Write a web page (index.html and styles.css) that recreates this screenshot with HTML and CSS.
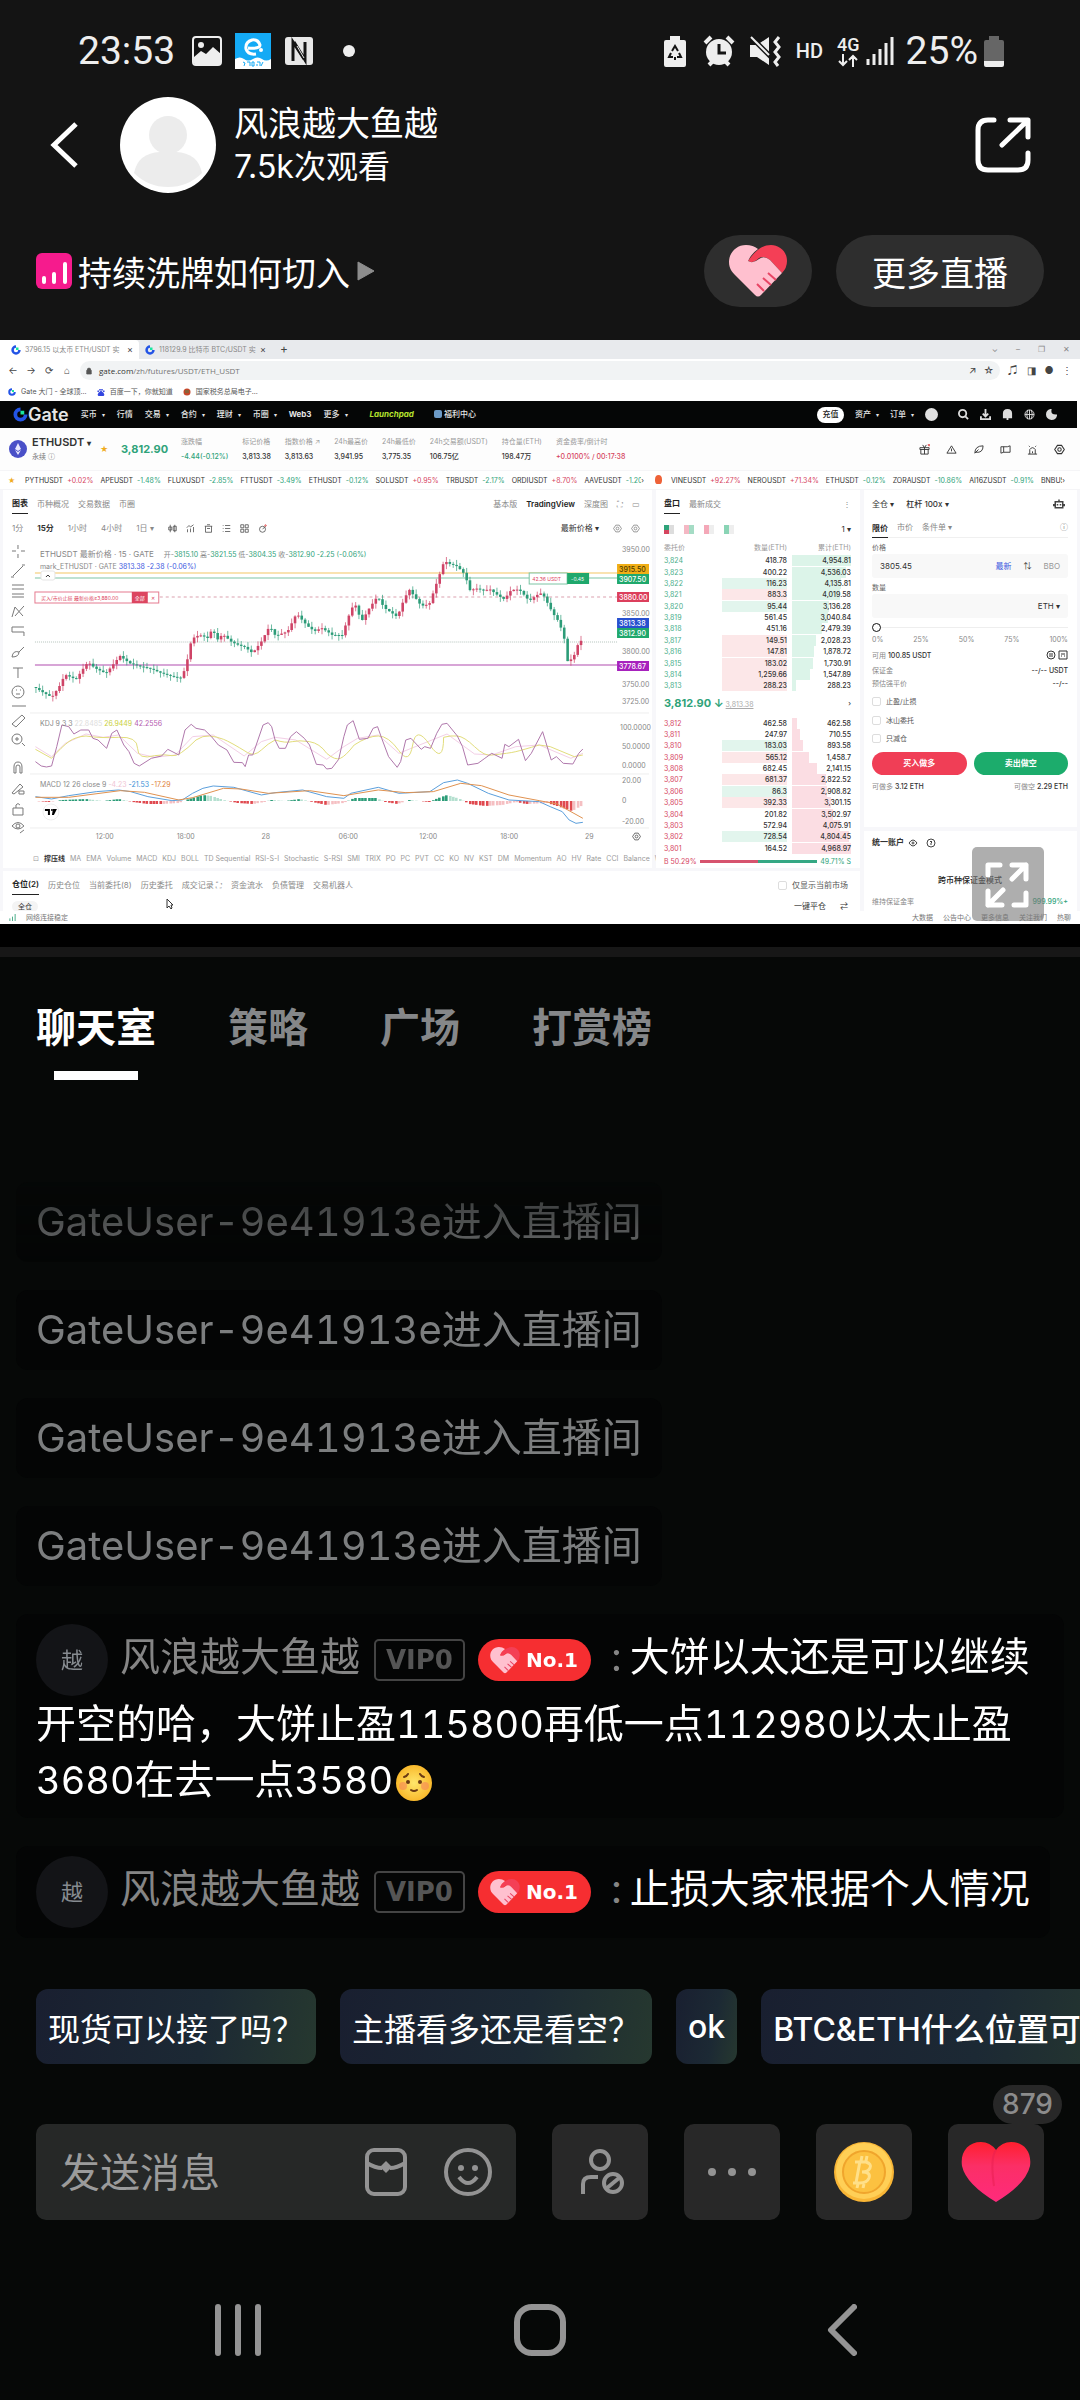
FILE: index.html
```html
<!DOCTYPE html>
<html lang="zh-CN">
<head>
    <meta charset="UTF-8">
    <meta name="viewport" content="width=device-width, initial-scale=1.0">
    <title>风浪越大鱼越 - 直播间</title>
    <link rel="stylesheet" href="styles.css">
</head>
<body>
    <!-- Shared icons -->
    <svg class="defs" aria-hidden="true">
        <symbol id="handshake" viewBox="0 0 58 53">
            <path class="hs-back" d="M19 16Q24 19 30 13Q35 10 41 15L53 28Q58 23 58 16C58 6 50 0 42 0C33 0 26 6 19 16Z"/>
            <path class="hs-front" d="M17 0C7 0 0 8 0 17C0 23 3 27 6 30L26 50Q29 53 32 50L53 28L41 15Q35 10 30 14Q24 19 19 16Q22 9 29 4Q24 0 17 0Z"/>
            <path class="hs-line" d="M28 39l7 7M34 33l8 7M39 28l8 7"/>
        </symbol>
        <symbol id="gate" viewBox="0 0 16 16">
            <path d="M8 2.5A5.5 5.5 0 1 0 13.5 8" fill="none" stroke="#2354e6" stroke-width="4"/>
            <path d="M8 4h4v4H8z" fill="#17e6a1"/>
        </symbol>
        <symbol id="hex" viewBox="0 0 16 16">
            <path d="M5 2h6l4 6-4 6H5L1 8z" fill="none" stroke="currentColor" stroke-width="1.5"/>
            <circle cx="8" cy="8" r="2.5" fill="none" stroke="currentColor" stroke-width="1.5"/>
        </symbol>
    </svg>

    <header class="top">
        <div class="status">
            <span class="clock">23:53</span>
            <svg class="st-img" viewBox="0 0 30 30"><rect x="1" y="1" width="28" height="28" rx="3" fill="none" stroke="#eee" stroke-width="2"/><circle cx="9" cy="9" r="3" fill="#eee"/><path d="M2 21l7-6 5 3 7-7 8 7v9q0 2-2 2H4q-2 0-2-2z" fill="#eee"/></svg>
            <svg class="st-app" viewBox="0 0 36 36"><path fill="#14aaf5" d="M0 0h36v36H0z"/><path fill="#fff" d="M0 26q5-3 9 0t9 0 9 0 9 0v10H0z"/><path d="M13 15q12 1 12-3-2-6-8-5-7 2-6 9 2 6 10 5" fill="none" stroke="#fff" stroke-width="3"/><circle cx="26" cy="17" r="2" fill="#fff"/><path d="M8 29l2 1-1 3M12 29h3v4M17 29v4h2v-4zM22 29h3v4M22 31v2M28 29l-2 4" fill="none" stroke="#14aaf5"/></svg>
            <svg class="st-nfc" viewBox="0 0 28 28"><rect width="28" height="28" rx="3" fill="#e8e8e8"/><path d="M8 24V5l11 17" fill="none" stroke="#141414" stroke-width="3"/><path d="M9 5l11 18V5" fill="none" stroke="#141414" stroke-width="3"/><path d="M12 9l7 12" stroke="#e8e8e8"/></svg>
            <span class="st-dot"></span>
            <div class="status-right">
                <svg class="st-batt" viewBox="0 0 22 31"><path d="M6 0h10v4h4q2 0 2 2v23q0 2-2 2H2q-2 0-2-2V6q0-2 2-2h4z" fill="#eee"/><path d="M8 15l3-5 3 5M15 17l2 4h-4M9 21H5l2-4M11 21v3" fill="none" stroke="#141414" stroke-width="2"/></svg>
                <svg class="st-alarm" viewBox="0 0 32 32"><circle cx="16" cy="17" r="13" fill="#eee"/><path d="M2 8l6-6M30 8l-6-6M6 30l4-4M26 30l-4-4" stroke="#eee" stroke-width="4"/><path d="M16 9v9h7" fill="none" stroke="#141414" stroke-width="3"/></svg>
                <svg class="st-mute" viewBox="0 0 32 32"><path d="M1 10h7l12-8v28L8 22H1z" fill="#eee"/><path d="M1 1l21 21" stroke="#141414" stroke-width="5"/><path d="M2 2l18 18" stroke="#eee" stroke-width="2"/><path d="M30 2l-4 5 4 5-4 5 4 5-4 5 3 4" fill="none" stroke="#eee" stroke-width="3"/></svg>
                <span class="hd">HD</span>
                <span class="net"><span>4G</span><svg viewBox="0 0 22 13"><path d="M6 0v11M2 7l4 4 4-4M16 13V2M12 6l4-4 4 4" fill="none" stroke="#eee" stroke-width="2"/></svg></span>
                <svg class="st-sig" viewBox="0 0 28 28"><path d="M2 22v6M8 17v11M14 12v16M20 6v22M26 0v28" stroke="#eee" stroke-width="3"/></svg>
                <span class="pct">25%</span>
                <svg class="st-level" viewBox="0 0 20 31"><path d="M5 0h10v4h3q2 0 2 2v19H0V6q0-2 2-2h3z" fill="#666"/><path d="M0 25h20v4q0 2-2 2H2q-2 0-2-2z" fill="#eee"/></svg>
            </div>
        </div>

        <div class="profile">
            <button class="back" aria-label="返回"><svg viewBox="0 0 28 46"><path d="M26 2L4 23l22 21" fill="none" stroke="#fff" stroke-width="5"/></svg></button>
            <svg class="avatar" viewBox="0 0 96 96"><circle cx="48" cy="48" r="48" fill="#fff"/><ellipse cx="48" cy="38" rx="19" ry="19" fill="#ececec"/><path d="M14 76q4-20 26-21h16q22 1 26 21-14 14-34 14T14 76z" fill="#ececec"/></svg>
            <div class="who">
                <span class="who-name">风浪越大鱼越</span>
                <span class="who-views">7.5k次观看</span>
            </div>
            <button class="share" aria-label="分享"><svg viewBox="0 0 56 56"><path d="M19 3H13Q3 3 3 13V43Q3 53 13 53H43Q53 53 53 43V36" fill="none" stroke="#fff" stroke-width="5" stroke-linecap="round"/><path d="M35 3H53V20M52 4L27 28" fill="none" stroke="#fff" stroke-width="5" stroke-linecap="round" stroke-linejoin="round"/></svg></button>
        </div>

        <div class="topic">
            <svg class="topic-ico" viewBox="0 0 36 36"><rect width="36" height="36" rx="6" fill="#f61b8d"/><path d="M8 25v4M18 21v8M29 11v18" stroke="#fff" stroke-width="4" stroke-linecap="round"/></svg>
            <a class="topic-title" href="#">持续洗牌如何切入</a>
            <svg class="topic-arrow" viewBox="0 0 18 20"><path d="M1 1l16 9L1 19z" fill="#8d8d8d" stroke="#8d8d8d" stroke-linejoin="round"/></svg>
            <button class="pill pill-heart" aria-label="送心"><svg><use href="#handshake"/></svg></button>
            <button class="pill pill-more">更多直播</button>
        </div>
    </header>

    <!-- Shared desktop shown in the player -->
    <main class="player">
        <section class="desk">
            <div class="b-tabs">
                <div class="b-tab active"><svg><use href="#gate"/></svg><span>3796.15 以太币 ETH/USDT 实</span><i>×</i></div>
                <div class="b-tab"><svg><use href="#gate"/></svg><span>118129.9 比特币 BTC/USDT 实</span><i>×</i></div>
                <span class="b-plus">+</span>
                <span class="b-win"><i>⌄</i><i>–</i><i>❐</i><i>✕</i></span>
            </div>
            <div class="b-bar">
                <i>←</i><i>→</i><i>⟳</i><i>⌂</i>
                <div class="b-url"><svg viewBox="0 0 8 10"><path d="M1 4h6v5H1zM2 4V2q2-2 4 0v2" fill="#555" stroke="#555"/></svg><span><b>gate.com</b>/zh/futures/USDT/ETH_USDT</span><i>↗</i><i>☆</i></div>
                <i>♫</i><i>◨</i><i>●</i><i>⋮</i>
            </div>
            <div class="b-marks">
                <svg><use href="#gate"/></svg><span>Gate 大门 - 全球顶...</span>
                <svg viewBox="0 0 16 16"><path d="M8 7q6 4 5 7-1 2-5 1-4 1-5-1-1-3 5-7zM2 8l1-3M6 5V2M10 5V2M14 8l-1-3" fill="#3245df" stroke="#3245df" stroke-width="3"/></svg><span>百度一下，你就知道</span>
                <svg viewBox="0 0 16 16"><circle cx="8" cy="8" r="7" fill="#c5482a"/><path d="M4 4h8v6H4z" fill="#8c6239"/></svg><span>国家税务总局电子...</span>
            </div>

            <nav class="g-nav">
                <svg class="g-logo"><use href="#gate"/></svg><strong>Gate</strong>
                <a href="#" class="dd">买币</a><a href="#">行情</a><a href="#" class="dd">交易</a><a href="#" class="dd">合约</a><a href="#" class="dd">理财</a><a href="#" class="dd">币圈</a><a href="#"><b>Web3</b></a><a href="#" class="dd">更多</a>
                <a href="#" class="launch">Launchpad</a><a href="#"><i class="cube"></i> 福利中心</a>
                <div class="g-right">
                    <button class="deposit">充值</button><a href="#" class="dd">资产</a><a href="#" class="dd">订单</a><i class="g-user"></i>
                    <svg viewBox="0 0 12 12"><circle cx="5" cy="5" r="4"/><path d="M8 8l3 3"/></svg>
                    <svg viewBox="0 0 12 12"><path d="M6 0v7M3 5l3 3 3-3M1 8v3h10V8"/></svg>
                    <svg viewBox="0 0 12 12"><path d="M2 9V5q0-4 4-4t4 4v4zM5 11h2" fill="#ddd"/></svg>
                    <svg viewBox="0 0 12 12" class="thin"><circle cx="6" cy="6" r="5"/><path d="M1 6h10M6 1v10M4 1q-2 5 0 10M8 1q2 5 0 10"/></svg>
                    <svg viewBox="0 0 12 12"><path d="M5 1q-1 6 6 6-1 4-5 4-5-1-5-5 0-4 4-5z" fill="#ddd"/></svg>
                </div>
            </nav>

            <div class="g-market">
                <svg class="eth" viewBox="0 0 18 18"><circle cx="9" cy="9" r="9" fill="#4a50c8"/><path d="M9 3l3 6-3 2-3-2zM6 10l3 2 3-2-3 5z" fill="#e8e8ff"/></svg>
                <div class="pair"><b>ETHUSDT <small>▾</small></b><span>永续 ⓘ</span></div>
                <i class="star">★</i>
                <strong class="last">3,812.90</strong>
                <dl>
                    <div><dt>涨跌幅</dt><dd class="up">-4.44(-0.12%)</dd></div>
                    <div><dt>标记价格</dt><dd>3,813.38</dd></div>
                    <div><dt>指数价格 ↗</dt><dd>3,813.63</dd></div>
                    <div><dt>24h最高价</dt><dd>3,941.95</dd></div>
                    <div><dt>24h最低价</dt><dd>3,775.35</dd></div>
                    <div><dt>24h交易额(USDT)</dt><dd>106.75亿</dd></div>
                    <div><dt>持仓量(ETH)</dt><dd>198.47万</dd></div>
                    <div><dt>资金费率/倒计时</dt><dd class="down">+0.0100% / 00:17:38</dd></div>
                </dl>
                <div class="m-icons">
                    <svg viewBox="0 0 12 12"><path d="M1 4h10v2H1zM2 6v5h8V6M6 4v7M4 1l2 3 2-3"/><circle cx="11" cy="1" r="1" stroke="#d33"/></svg>
                    <svg viewBox="0 0 12 12"><path d="M6 2l5 8H1zM6 5v3"/></svg>
                    <svg viewBox="0 0 12 12"><path d="M2 10q0-8 9-8 0 8-8 7M2 10l4-4"/></svg>
                    <svg viewBox="0 0 12 12"><path d="M1 3h7l3-1v7H4L1 10zM4 3v6"/></svg>
                    <svg viewBox="0 0 12 12"><path d="M1 11h10M3 11V6q3-4 6 0v5M6 8v2M2 2l1 1M10 2L9 3"/></svg>
                    <svg><use href="#hex"/></svg>
                </div>
            </div>

            <div class="g-ticker">
                <div class="tick-left"><i class="star">★</i><span id="tickLeft" class="ticks"></span><i>›</i></div>
                <div class="tick-right"><i class="fire"></i><span id="tickRight" class="ticks"></span><i>›</i></div>
            </div>

            <div class="g-work">
                <div class="g-left">
                    <div class="g-upper">
                        <section class="panel chart-panel">
                            <div class="p-tabs"><a href="#" class="on">图表</a><a href="#">币种概况</a><a href="#">交易数据</a><a href="#">币圈</a><span class="push"></span><a href="#">基本版</a><a href="#" class="tv">TradingView</a><a href="#">深度图</a><i>⛶</i><i>▭</i></div>
                            <div class="p-times"><span>1分</span><b>15分</b><span>1小时</span><span>4小时</span><span>1日 ▾</span>
                                <svg viewBox="0 0 12 12"><path d="M3 1v10M9 1v10M1 4h4v4H1zM7 3h4v6H7z"/></svg>
                                <svg viewBox="0 0 12 12"><path d="M2 11V7M6 11V6M10 11V4M1 5l3-3 2 2 4-3"/></svg>
                                <svg viewBox="0 0 12 12"><path d="M1 3h10M2 3v8h8V3M4 1h4M4 6h4"/></svg>
                                <svg viewBox="0 0 12 12"><path d="M4 2h7M4 6h7M4 10h7M1 2h1M1 6h1M1 10h1"/></svg>
                                <svg viewBox="0 0 12 12"><path d="M1 1h4v4H1zM7 1h4v4H7zM1 7h4v4H1zM7 7h4v4H7z"/></svg>
                                <svg viewBox="0 0 12 12"><circle cx="6" cy="7" r="4"/><path d="M6 7l4-4"/><circle cx="10" cy="2" r="1" stroke="#d33"/></svg>
                                <span class="push"></span><em>最新价格 ▾</em>
                                <svg><use href="#hex"/></svg><svg><use href="#hex"/></svg>
                            </div>
                            <svg id="chart" class="chart" viewBox="3 538 650 310" preserveAspectRatio="none">
                                <!-- drawing tools -->
                                <g class="tools">
                                    <path d="M18 545v4M18 554v4M12 551h4M21 551h4M13 576l10-10M11 577h3M22 565h3M12 585h12M12 589h12M12 594h12M12 597h12M12 617l3-10 8 9M24 606l-9 10M12 627h12M12 632h12M12 627v5M24 632v4M12 657q1-7 7-5 0 5-7 5zM19 652l5-5M13 668h10M18 668v10M12 706h14M12 724l10-9 3 3-9 9zM22 743l3 3M14 773v-6q0-5 4-5t4 5v6h-2v-6q0-2-2-2t-2 2v6zM12 793l8-9 3 3-9 7zM19 791h5v3h-5zM13 808h10v7H13zM16 808v-3q2-3 4 0M12 826q6-7 12 0-6 6-12 0zM20 833l4-3"/>
                                    <circle cx="18" cy="692" r="6"/><path d="M16 690h1M20 690h1M16 694h4"/>
                                    <circle cx="17" cy="739" r="5"/><path d="M15 739h4M17 737v4"/><circle cx="18" cy="826" r="2"/>
                                </g>
                                <path class="grid" d="M30 713h620M30 774h620M30 828h620"/>
                                <path d="M35 573h583" stroke="#f3c662"/><path d="M35 578h583" stroke="#7cc4a4"/>
                                <path d="M160 597h458" stroke="#dba0ae" stroke-dasharray="3 3"/>
                                <path d="M35 642h583" stroke="#b5c4bd" stroke-dasharray="1 1"/>
                                <path d="M35 665h583" stroke="#b04aae"/>
                                <g id="candles"></g>
                                <g id="macdBars"></g>
                                <g class="osc" transform="translate(0 630) scale(.3444 .3333)">
                                    <path stroke="#f3cfe6" d="M103 350L150 380 190 340 250 312 300 322 345 315 400 370 450 382 510 375 560 320 620 315 710 378 760 335 800 322 860 330 950 388 1000 350 1040 325 1100 315 1160 370 1220 345 1300 312 1380 372 1430 375 1500 350 1568 345 1660 385 1695 370"/>
                                    <path stroke="#e2dd7c" d="M103 358L150 385Q180 350 200 335T250 318Q290 325 345 322T400 355 450 377Q480 372 500 377T570 330Q590 316 610 318T650 328 720 368Q740 380 760 360T800 330Q830 340 850 335T900 335 950 370Q975 392 990 385T1030 345Q1070 318 1100 318T1160 362 1200 345 1250 345 1290 322Q1310 316 1330 318T1380 350 1430 375Q1480 370 1500 365T1568 345L1600 350 1670 380 1695 375"/>
                                    <path stroke="#b078ac" d="M103 395L120 408Q135 414 150 408L165 350 180 285 200 290 215 312 235 300 258 300 270 325 285 330 310 355 325 310 340 300 360 345 375 365 390 400 405 408 440 385 470 378 488 358 520 375 538 300 556 283 570 295 595 300 615 320 635 345 660 360 680 397 705 398 713 410 723 375 735 375 750 330 765 285 780 278 790 290 800 330 812 355 830 355 845 320 862 305 885 325 900 345 920 403 940 405 950 417 965 415 985 388 1000 320 1010 285 1027 272 1045 328 1070 325 1085 295 1098 290 1110 325 1130 380 1155 412 1165 395 1180 330 1195 325 1225 358 1235 350 1252 355 1270 310 1285 283 1300 280 1330 318 1345 350 1360 405 1390 400 1410 385 1430 370 1460 385 1468 343 1480 350 1508 328 1528 392 1545 370 1578 305 1603 390 1618 380 1638 400 1666 402 1683 370 1695 357"/>
                                    <path stroke="#5b9fdc" d="M103 500L150 507 200 497 280 485 345 480 380 485 430 500 500 512 530 510 560 490 590 475 620 468 680 472 760 495 800 488 880 480 950 500 1000 505 1020 490 1100 472 1160 490 1250 485 1290 458 1330 450 1360 460 1420 490 1480 510 1568 515 1600 530 1635 545 1655 570 1675 580 1695 577"/>
                                    <path stroke="#e09250" d="M103 502L200 502 350 482 420 487 520 510 560 503 650 475 700 477 780 490 900 482 1000 497 1100 480 1180 488 1260 485 1340 460 1400 467 1480 495 1568 512 1620 522 1695 565"/>
                                </g>
                                <g class="t8"><text x="40" y="557">ETHUSDT 最新价格 · 15 · GATE</text></g>
                                <g class="t7 green"><text x="164" y="557"><tspan class="gray">开-</tspan>3815.10 <tspan class="gray">高-</tspan>3821.55 <tspan class="gray">低-</tspan>3804.35 <tspan class="gray">收-</tspan>3812.90 -2.25 (-0.06%)</text></g>
                                <g class="t7"><text x="40" y="569">mark_ETHUSDT · GATE <tspan class="blue">3813.38 -2.38 (-0.06%)</tspan></text></g>
                                <rect x="41" y="571" width="14" height="9" rx="2" fill="#fff" stroke="#e5e5e5"/><path d="M46 577l2-2 2 2" fill="none" stroke="#333"/>
                                <rect x="35" y="592" width="124" height="11" fill="#fff" stroke="#e57b90"/><rect x="132" y="592" width="16" height="11" fill="#dc4560"/>
                                <g class="t5"><text x="41" y="600" fill="#dc4560">买入/市价止损 最新价格≥3,880.00</text><text x="135" y="600" fill="#fff">全部</text><text x="151" y="600" fill="#dc4560">✕</text></g>
                                <rect x="530" y="573" width="38" height="11" fill="#fff" stroke="#7cc4a4"/><rect x="568" y="573" width="22" height="11" fill="#1fa86c"/>
                                <g class="t5"><text x="533" y="581" fill="#dc4560">42.36 USDT</text><text x="572" y="581" fill="#fff">-0.45</text></g>
                                <g class="t7"><text x="40" y="726">KDJ 9 3 3 <tspan fill="#ddd">22.8485</tspan> <tspan fill="#c9cf3a">26.9449</tspan> <tspan fill="#b45bb0">42.2556</tspan></text>
                                    <text x="40" y="787">MACD 12 26 close 9 <tspan fill="#f0c4d4">-4.23</tspan> <tspan fill="#3b8fd6">-21.53</tspan> <tspan fill="#e08038">-17.29</tspan></text></g>
                                <circle cx="51" cy="812" r="8" fill="#fff" stroke="#eee"/><path d="M45 809h5v6h-2v-4h-3zM53 809h4l-3 6h-2z"/><circle cx="52" cy="810" r="1"/>
                                <g class="t7 axis"><text x="96" y="839">12:00</text><text x="177" y="839">18:00</text><text x="262" y="839">28</text><text x="339" y="839">06:00</text><text x="420" y="839">12:00</text><text x="501" y="839">18:00</text><text x="586" y="839">29</text>
                                    <text x="623" y="552">3950.00</text><text x="623" y="616">3850.00</text><text x="623" y="654">3800.00</text><text x="623" y="687">3750.00</text><text x="623" y="704">3725.00</text>
                                    <text x="621" y="730">100.0000</text><text x="623" y="749">50.0000</text><text x="623" y="768">0.0000</text><text x="623" y="783">20.00</text><text x="623" y="803">0</text><text x="623" y="824">-20.00</text></g>
                                <g class="t7 tags"><rect x="618" y="564" width="32" height="10" fill="#f0ae16"/><rect x="618" y="574" width="32" height="10" fill="#1fa86c"/><rect x="618" y="592" width="32" height="10" fill="#dc3f5c"/><rect x="618" y="618" width="32" height="10" fill="#2750cf"/><rect x="618" y="628" width="32" height="10" fill="#1fa86c"/><rect x="618" y="661" width="32" height="10" fill="#a722bd"/>
                                    <text x="620" y="572" class="dark">3915.50</text><text x="620" y="582">3907.50</text><text x="620" y="600">3880.00</text><text x="620" y="626">3813.38</text><text x="620" y="636">3812.90</text><text x="620" y="669">3778.67</text></g>
                                <g transform="translate(633 832)" color="#555"><use href="#hex" width="9" height="9"/></g>
                            </svg>
                            <div class="p-inds"><i>⊡</i><b>撑压线</b><span>MA</span><span>EMA</span><span>Volume</span><span>MACD</span><span>KDJ</span><span>BOLL</span><span>TD Sequential</span><span>RSI-S-I</span><span>Stochastic</span><span>S-RSI</span><span>SMI</span><span>TRIX</span><span>PO</span><span>PC</span><span>PVT</span><span>CC</span><span>KO</span><span>NV</span><span>KST</span><span>DM</span><span>Momentum</span><span>AO</span><span>HV</span><span>Rate</span><span>CCI</span><span>Balance</span><span>Williams</span><i>›</i></div>
                        </section>

                        <section class="panel book-panel">
                            <div class="p-tabs"><a href="#" class="on">盘口</a><a href="#">最新成交</a><span class="push"></span><i>⋮</i></div>
                            <div class="book-modes"><i class="m1"></i><i class="m2"></i><i class="m3"></i><i class="m4"></i><span>1 ▾</span></div>
                            <table class="book">
                                <thead><tr><th>委托价</th><th>数量(ETH)</th><th>累计(ETH)</th></tr></thead>
                                <tbody id="asks"></tbody>
                                <tbody class="mid"><tr><td colspan="3"><b>3,812.90 ↓</b> <u>3,813.38</u><i>›</i></td></tr></tbody>
                                <tbody id="bids"></tbody>
                            </table>
                            <div class="ratio"><span class="down">B 50.29%</span><i class="r1"></i><i class="r2"></i><span class="up">49.71% S</span></div>
                        </section>
                    </div>

                    <section class="panel pos-panel">
                        <div class="p-tabs"><a href="#" class="on">仓位(2)</a><a href="#">历史仓位</a><a href="#">当前委托(8)</a><a href="#">历史委托</a><a href="#">成交记录 ⛶</a><a href="#">资金流水</a><a href="#">负债管理</a><a href="#">交易机器人</a><span class="push"></span><label><input type="checkbox">仅显示当前市场</label></div>
                        <div class="pos-bottom"><span class="cross">全仓</span><svg class="cursor" viewBox="0 0 8 12"><path d="M1 1v9l2-2 2 3 1-1-1-3h2z" fill="#fff" stroke="#333"/></svg><span class="push"></span><span>一键平仓</span><i>⇄</i></div>
                    </section>
                </div>

                <section class="panel trade-panel">
                    <div class="tr-head"><span>全仓 ▾</span><b>杠杆 100x ▾</b><svg viewBox="0 0 16 16"><path d="M3 5h10v8H3zM8 5V2M1 8v3M15 8v3M6 8v2M10 8v2" fill="none" stroke="#444" stroke-width="2"/></svg></div>
                    <div class="p-tabs tr-tabs"><a href="#" class="on">限价</a><a href="#">市价</a><a href="#">条件单 ▾</a><span class="push"></span><i>ⓘ</i></div>
                    <label for="price">价格</label>
                    <div class="tr-box"><input id="price" type="text" value="3805.45"><span class="blue">最新</span><i>⇅</i><span class="bbo">BBO</span></div>
                    <label for="amount">数量</label>
                    <div class="tr-box"><input id="amount" type="text"><span>ETH ▾</span></div>
                    <input class="tr-range" type="range" min="0" max="100" value="0" aria-label="仓位比例">
                    <div class="tr-row tr-marks"><span>0%</span><span>25%</span><span>50%</span><span>75%</span><span>100%</span></div>
                    <div class="tr-row tr-avail"><span>可用 <b>100.85 USDT</b></span>
                        <svg viewBox="0 0 22 10"><circle cx="5" cy="5" r="4"/><path d="M3 4h4M3 6h4M13 1h8v8h-8zM15 4h4M15 6h1M18 6h1"/></svg>
                    </div>
                    <div class="tr-row"><span>保证金</span><b>--/-- USDT</b></div>
                    <div class="tr-row"><span>预估强平价</span><b>--/--</b></div>
                    <div class="tr-checks">
                        <label><input type="checkbox">止盈/止损</label>
                        <label><input type="checkbox">冰山委托</label>
                        <label><input type="checkbox">只减仓</label>
                    </div>
                    <div class="tr-btns"><button class="buy">买入做多</button><button class="sell">卖出做空</button></div>
                    <div class="tr-row"><span>可做多 <b>3.12 ETH</b></span><span>可做空 <b>2.29 ETH</b></span></div>
                    <div class="account">
                        <b>统一账户
                            <svg viewBox="0 0 30 10"><path d="M1 5q4-6 8 0-4 6-8 0z"/><circle cx="5" cy="5" r="1"/><circle cx="23" cy="5" r="4"/><path d="M22 4q1-2 2 0l-1 1v2"/></svg>
                        </b>
                        <p>跨币种保证金模式</p>
                        <div class="tr-row"><span>维持保证金率</span><b class="up">999.99%+</b></div>
                    </div>
                </section>
            </div>
            <footer class="g-foot"><svg viewBox="0 0 8 8"><path d="M1 5v3M4 3v5M7 0v8" stroke="#35a37a"/></svg><span>网络连接稳定</span><span class="push"></span><a href="#">大数据</a><a href="#">公告中心</a><a href="#">更多信息</a><a href="#">关注我们</a><a href="#">热聊</a></footer>
        </section>
        <button class="full" aria-label="全屏"><svg viewBox="0 0 72 74"><path d="M16 28V18h12M40 18h14v14M54 18L40 32M54 46v12H42M30 58H16V44M16 58l15-15" fill="none" stroke="#fff" stroke-width="5" stroke-linecap="round" stroke-linejoin="round"/></svg></button>
    </main>

    <nav class="tabs">
        <a class="active" href="#">聊天室</a>
        <a href="#">策略</a>
        <a href="#">广场</a>
        <a href="#">打赏榜</a>
    </nav>

    <section class="chat">
        <p class="msg">GateUser-9e41913e进入直播间</p>
        <p class="msg">GateUser-9e41913e进入直播间</p>
        <p class="msg">GateUser-9e41913e进入直播间</p>
        <p class="msg">GateUser-9e41913e进入直播间</p>
        <div class="msg talk">
            <span class="talk-avatar">越</span><span class="talk-name">风浪越大鱼越</span><span class="vip">VIP0</span><span class="rank"><svg><use href="#handshake"/></svg>No.1</span><span class="colon">:</span>大饼以太还是可以继续开空的哈，大饼止盈<span class="num">115800</span>再低一点<span class="num">112980</span>以太止盈<span class="num">3680</span>在去一点<span class="num">3580</span><svg class="emoji" viewBox="0 0 36 36"><defs><radialGradient id="face"><stop offset="0" stop-color="#ffe66b"/><stop offset="1" stop-color="#f9b92c"/></radialGradient></defs><circle cx="18" cy="18" r="18" fill="url(#face)"/><circle cx="7" cy="21" r="4" fill="#f7875a" opacity=".6"/><circle cx="29" cy="21" r="4" fill="#f7875a" opacity=".6"/><path d="M8 12q3-1 4-3M28 12q-3-1-4-3M15 25q3 2 6 0" fill="none" stroke="#6b3a13" stroke-width="2" stroke-linecap="round"/><ellipse cx="12" cy="17" rx="2" ry="2" fill="#6b3a13"/><ellipse cx="24" cy="17" rx="2" ry="2" fill="#6b3a13"/></svg>
        </div>
        <div class="msg talk">
            <span class="talk-avatar">越</span><span class="talk-name">风浪越大鱼越</span><span class="vip">VIP0</span><span class="rank"><svg><use href="#handshake"/></svg>No.1</span><span class="colon">:</span>止损大家根据个人情况
        </div>
    </section>

    <div class="quick">
        <button>现货可以接了吗？</button>
        <button>主播看多还是看空？</button>
        <button class="en">ok</button>
        <button class="en">BTC&amp;ETH什么位置可以</button>
    </div>

    <form class="compose">
        <div class="field">
            <input type="text" placeholder="发送消息" aria-label="发送消息">
            <button type="button" aria-label="红包"><svg viewBox="0 0 42 48"><rect x="2" y="2" width="38" height="44" rx="7"/><path d="M2 15q8 5 15 5M40 15q-8 5-15 5"/><path d="M21 13l6 6-6 6-6-6z" class="solid"/></svg></button>
            <button type="button" aria-label="表情"><svg viewBox="0 0 48 48"><circle cx="24" cy="24" r="22"/><circle cx="17" cy="20" r="3" class="solid"/><circle cx="31" cy="20" r="3" class="solid"/><path d="M15 29q9 12 18 0"/></svg></button>
        </div>
        <button type="button" class="sq" aria-label="屏蔽用户"><svg viewBox="0 0 96 96"><circle cx="48" cy="36" r="9"/><path d="M31 70V60Q31 53 39 53H46"/><circle cx="61" cy="59" r="9"/><path d="M55 64l12-10"/></svg></button>
        <button type="button" class="sq" aria-label="更多"><svg viewBox="0 0 96 96"><circle cx="28" cy="48" r="4" class="solid"/><circle cx="48" cy="48" r="4" class="solid"/><circle cx="68" cy="48" r="4" class="solid"/></svg></button>
        <button type="button" class="sq" aria-label="打赏"><svg viewBox="0 0 96 96" class="coin"><circle cx="48" cy="48" r="30" fill="#f9b636"/><circle cx="48" cy="47" r="28" fill="#ffcf56"/><circle cx="48" cy="48" r="21" fill="#fcc140" stroke="#f0a52c" stroke-width="2"/><path d="M44 37l-4 22M39 38h11q6 2 4 6-2 4-8 4 9 0 7 6-2 5-9 5h-7M46 32l-1 5M51 32l-1 5M42 60l-1 4M48 60l-1 4" fill="none" stroke="#ffe089" stroke-width="3"/></svg></button>
        <button type="button" class="sq" aria-label="点赞"><svg viewBox="0 0 96 96" class="like"><defs><linearGradient id="love" x1="0" y1="0" x2="0" y2="1"><stop offset="0" stop-color="#ff1f2e"/><stop offset=".4" stop-color="#fb2f66"/><stop offset="1" stop-color="#ff2a7c"/></linearGradient></defs><path d="M48 26Q42 18 33 18C20 18 12 28 14 42Q18 60 48 78Q78 60 82 42C84 28 76 18 63 18Q54 18 48 26Z" fill="url(#love)"/><path d="M48 26Q42 34 46 62" fill="none" stroke="#e81d50" stroke-width="2" opacity=".5"/></svg><span class="count">879</span></button>
    </form>

    <nav class="sysnav">
        <button aria-label="最近"><svg viewBox="0 0 46 52"><path d="M3 3v46M23 3v46M43 3v46" stroke-width="6"/></svg></button>
        <button aria-label="主页"><svg viewBox="0 0 52 52"><rect x="3" y="3" width="46" height="46" rx="15" stroke-width="6"/></svg></button>
        <button aria-label="返回"><svg viewBox="0 0 30 52"><path d="M27 3L4 26l23 23" stroke-width="6"/></svg></button>
    </nav>

    <script>
        // Ticker lists
        function fillTicks(id, items) {
            document.getElementById(id).innerHTML = items.map(([name, pct]) =>
                `<span>${name} <em class="${pct[0] === "+" ? "down" : "up"}">${pct}</em></span>`).join("");
        }
        fillTicks("tickLeft", [["PYTHUSDT", "+0.02%"], ["APEUSDT", "-1.48%"], ["FLUXUSDT", "-2.85%"], ["FTTUSDT", "-3.49%"], ["ETHUSDT", "-0.12%"], ["SOLUSDT", "+0.95%"], ["TRBUSDT", "-2.17%"], ["ORDIUSDT", "+8.70%"], ["AAVEUSDT", "-1.20%"], ["A\\", ""]]);
        fillTicks("tickRight", [["VINEUSDT", "+92.27%"], ["NEROUSDT", "+71.34%"], ["ETHUSDT", "-0.12%"], ["ZORAUSDT", "-10.86%"], ["AI16ZUSDT", "-0.91%"], ["BNBUSDT", ""]]);

        // Order book: price, amount, total, flash colour
        const asks = [["3,824", "418.78", "4,954.81"], ["3,823", "400.22", "4,536.03"], ["3,822", "116.23", "4,135.81", "g"], ["3,821", "883.3", "4,019.58", "r"], ["3,820", "95.44", "3,136.28", "g"], ["3,819", "561.45", "3,040.84"], ["3,818", "451.16", "2,479.39"], ["3,817", "149.51", "2,028.23", "r"], ["3,816", "147.81", "1,878.72", "r"], ["3,815", "183.02", "1,730.91", "r"], ["3,814", "1,259.66", "1,547.89", "r"], ["3,813", "288.23", "288.23", "r"]];
        const bids = [["3,812", "462.58", "462.58"], ["3,811", "247.97", "710.55"], ["3,810", "183.03", "893.58", "g"], ["3,809", "565.12", "1,458.7", "r"], ["3,808", "682.45", "2,141.15"], ["3,807", "681.37", "2,822.52", "r"], ["3,806", "86.3", "2,908.82", "g"], ["3,805", "392.33", "3,301.15", "r"], ["3,804", "201.82", "3,502.97"], ["3,803", "572.94", "4,075.91"], ["3,802", "728.54", "4,804.45", "g"], ["3,801", "164.52", "4,968.97"]];
        function fillBook(id, rows) {
            document.getElementById(id).innerHTML = rows.map(([price, amount, total, flash]) => {
                const width = Math.round(parseFloat(total.replace(",", "")) / 49.69);
                return `<tr><td>${price}</td><td><div class="flash ${flash || ""}">${amount}</div></td>
                    <td><div class="depth"><i style="width:${width}%"></i><span>${total}</span></div></td></tr>`;
            }).join("");
        }
        fillBook("asks", asks);
        fillBook("bids", bids);

        // Value at x on a polyline of anchor points
        function along(points, x) {
            for (let i = 1; i < points.length; i++) {
                const [x0, y0] = points[i - 1], [x1, y1] = points[i];
                if (x <= x1) return y0 + (y1 - y0) * (x - x0) / (x1 - x0);
            }
            return points[points.length - 1][1];
        }

        // Candles
        const path = [[36,688],[52,695],[60,684],[65,674],[76,681],[88,664],[95,669],[106,672],[120,654],[130,663],[140,668],[160,673],[181,676],[186,666],[192,638],[200,636],[208,640],[213,630],[217,642],[223,635],[232,641],[245,645],[253,652],[262,642],[270,628],[276,638],[288,632],[297,612],[308,624],[315,630],[322,628],[333,637],[343,637],[348,620],[355,602],[362,620],[370,606],[378,595],[385,608],[398,619],[405,600],[410,591],[422,605],[430,602],[437,582],[445,560],[450,564],[458,568],[466,577],[470,592],[478,589],[485,590],[490,587],[505,598],[512,590],[520,591],[530,603],[538,596],[543,593],[554,612],[560,620],[566,640],[568,660],[574,658],[580,642],[584,642]];
        let candles = "";
        let open = 687;
        for (let i = 0; i < 163; i++) {
            const x = Math.round((36 + i * 3.37) * 10) / 10;
            const wob = Math.sin(i * 12.9) * 2;
            const close = Math.round((along(path, x) + wob) * 10) / 10;
            const top = Math.min(open, close), h = Math.max(1, Math.abs(open - close));
            const color = close < open ? "#cf4467" : "#2c9c78";
            const up = Math.abs(Math.sin(i * 7.3)) * 5, low = Math.abs(Math.cos(i * 5.1)) * 5;
            candles += `<path d="M${x} ${top - up}V${top + h + low}" stroke="${color}" stroke-width=".7"/><path d="M${x} ${top}v${h}" stroke="${color}" stroke-width="2.6"/>`;
            open = close;
        }
        document.getElementById("candles").innerHTML = candles;

        // MACD histogram
        const hist = [[36,0],[50,-1],[62,1],[86,2],[103,0],[119,2],[133,-1],[148,-3],[162,-3],[179,-2],[189,2],[203,6],[212,5],[224,1],[238,-2],[253,-3],[265,-1],[272,1],[286,0],[300,2],[313,-1],[327,-4],[344,-2],[355,3],[377,3],[386,-1],[398,-3],[410,1],[430,-1],[439,3],[448,6],[461,2],[470,-3],[486,-5],[503,-4],[517,-1],[527,-3],[548,-2],[558,-5],[573,-10],[584,-4]];
        let bars = "", last = 0;
        for (let i = 0; i < 163; i++) {
            const x = Math.round(36 + i * 3.37);
            const v = along(hist, x);
            const color = v > 0 ? (v >= last ? "#2c9c78" : "#b5e0d0") : (v <= last ? "#e0494f" : "#f5bfc2");
            bars += `<path d="M${x} 801v${-v}" stroke="${color}" stroke-width="2.6"/>`;
            last = v;
        }
        document.getElementById("macdBars").innerHTML = bars;
    </script>
</body>
</html>
```
FILE: styles.css
```css
/* Body style */
* {
    box-sizing: border-box;
}

body {
    font-family: Inter, "Noto Sans CJK SC", sans-serif;
    background-color: #060807;
    color: #fff;
    margin: 0;
    overflow-x: hidden;
}

button,
input {
    font: inherit;
    color: inherit;
    background: none;
    border: none;
    padding: 0;
    margin: 0;
}

a {
    color: inherit;
    text-decoration: none;
}

i,
em {
    font-style: normal;
}

svg {
    display: block;
    flex: none;
}

.defs {
    display: block;
    width: 0;
    height: 0;
    position: absolute;
}

.hs-back { fill: #f43f56; }
.hs-front { fill: #ffc0cf; }
.hs-line { fill: none; stroke: #e84565; stroke-width: 2; }

/* Header style */
.top {
    background-color: #141414;
    padding: 21px 36px 33px;
}

.status {
    display: flex;
    align-items: center;
    height: 60px;
    padding: 0 40px 0 42px;
    font-family: Roboto, "Noto Sans CJK SC", sans-serif;
    font-size: 39px;
    color: #eee;
}

.clock { margin-right: 17px; }
.st-img { width: 30px; height: 30px; }
.st-app { width: 36px; height: 36px; margin: 0 14px 0 13px; }
.st-nfc { width: 28px; height: 28px; }
.st-dot { width: 12px; height: 12px; margin-left: 30px; border-radius: 50%; background: #eee; }

.status-right {
    display: flex;
    align-items: center;
    margin-left: auto;
}

.st-batt { width: 22px; height: 31px; }
.st-alarm { width: 32px; height: 32px; margin: 0 14px 0 17px; }
.st-mute { width: 32px; height: 32px; }
.hd { font-size: 20px; font-weight: 500; margin: 0 14px 0 15px; }
.net { display: flex; flex-direction: column; align-items: center; font-size: 18px; font-weight: 500; line-height: 18px; }
.net svg { width: 22px; height: 13px; }
.st-sig { width: 28px; height: 28px; margin: 0 12px 0 6px; }
.pct { margin-right: 6px; }
.st-level { width: 20px; height: 31px; }

.profile {
    display: flex;
    align-items: center;
    margin-top: 16px;
}

.back { padding: 0 42px 0 14px; }
.back svg { width: 28px; height: 46px; }
.avatar { width: 96px; height: 96px; }
.who { display: flex; flex-direction: column; margin: 0 auto 0 18px; }
.who-name { font-size: 34px; line-height: 44px; }
.who-views { font-size: 32px; line-height: 42px; }
.share { padding-right: 13px; }
.share svg { width: 56px; height: 56px; }

.topic {
    display: flex;
    align-items: center;
    margin-top: 42px;
    font-size: 34px;
}

.topic-ico { width: 36px; height: 36px; margin-right: 6px; }
.topic-arrow { width: 18px; height: 20px; margin: 0 auto 0 7px; }

.pill {
    height: 72px;
    border-radius: 36px;
    background-color: #2e2e2e;
}

.pill-heart { padding: 0 25px; margin-right: 24px; }
.pill-heart svg { width: 58px; height: 53px; }
.pill-more { padding: 0 36px; }

/* Player style */
.player {
    position: relative;
    background-color: #000;
    padding-bottom: 23px;
    border-bottom: 10px solid #171717;
}

.full {
    position: absolute;
    right: 36px;
    top: 507px;
    width: 72px;
    height: 74px;
    border-radius: 5px;
    background-color: rgba(120, 120, 120, 0.6);
}

.desk {
    background-color: #fff;
    color: #333;
    font-size: 8px;
    line-height: 11px;
    overflow: hidden;
    white-space: nowrap;
}

.desk input,
.desk button { line-height: 11px; }
.up { color: #2fa37a; }
.down { color: #d6455f; }
.blue { color: #3d58e0; fill: #3d58e0; }
.push { flex: 1; }

/* Browser rows */
.b-tabs {
    display: flex;
    align-items: stretch;
    height: 19px;
    background-color: #e8eaed;
    color: #888;
}

.b-tab { display: flex; align-items: center; width: 133px; padding: 0 6px; gap: 4px; font-size: 7px; }
.b-tab:first-child { width: 139px; padding-left: 11px; }
.b-tab.active { background: #fff; border-radius: 0 4px 0 0; }
.b-tab span { flex: 1; }
.b-tab svg { width: 10px; height: 10px; }
.b-tab i { color: #444; font-size: 9px; }
.b-plus { padding: 2px 8px; font-size: 12px; line-height: 14px; color: #444; }
.b-win { display: flex; align-items: center; gap: 18px; margin-left: auto; padding-right: 10px; }

.b-bar {
    display: flex;
    align-items: center;
    gap: 8px;
    height: 23px;
    padding: 0 8px;
    color: #444;
    font-size: 10px;
}

.b-bar > i { width: 10px; text-align: center; }
.b-url { display: flex; align-items: center; gap: 7px; flex: 1; height: 19px; padding: 0 6px; border-radius: 10px; background: #f1f3f4; }
.b-url svg { width: 6px; height: 8px; }
.b-url span { flex: 1; font-family: "Open Sans", sans-serif; font-size: 8px; color: #777; }
.b-url b { font-weight: 400; color: #333; }

.b-marks { display: flex; align-items: center; gap: 5px; height: 19px; padding: 0 8px; font-size: 7px; color: #555; }
.b-marks svg { width: 8px; height: 8px; }
.b-marks span { margin-right: 5px; }

/* Exchange navigation */
.g-nav {
    display: flex;
    align-items: center;
    gap: 12px;
    height: 27px;
    margin-right: 3px;
    padding: 0 20px 0 13px;
    background: #050606;
    color: #e6e6e6;
    font-weight: 500;
}

.g-nav strong { margin-left: -12px; font-size: 18px; font-weight: 600; line-height: 20px; }
.g-logo { width: 15px; height: 15px; }
.dd::after { content: "▾"; display: inline-block; width: 8px; text-align: right; font-size: 6px; }
.launch { color: #b6e32e; font-style: italic; font-weight: 700; margin: 0 8px 0 10px; }
.cube { display: inline-block; width: 8px; height: 8px; border-radius: 2px; background: #6d9bc7; vertical-align: -1px; }
.g-right { display: flex; align-items: center; gap: 11px; margin-left: auto; }
.g-right svg { width: 11px; height: 11px; fill: none; stroke: #ddd; stroke-width: 2; }
.g-right .thin { stroke-width: 1; }
.deposit { width: 27px; height: 16px; border-radius: 8px; background: #fff; color: #222; }
.g-user { width: 13px; height: 13px; margin-right: 9px; border-radius: 50%; background: #e0e0e0; }

.g-market {
    display: flex;
    align-items: center;
    height: 42px;
    padding: 0 15px 0 9px;
    background: #fdfdfd;
}

.eth { width: 18px; height: 18px; margin-right: 5px; }
.pair { display: flex; flex-direction: column; width: 68px; gap: 1px; }
.pair b { font-size: 11px; line-height: 13px; font-weight: 600; }
.pair span { font-size: 7px; color: #777; }
.pair small { font-size: 8px; }
.star { color: #f0ac1e; width: 12px; }
.last { width: 60px; margin-left: 9px; font-size: 11px; color: #2fa37a; }
.g-market dl { display: flex; gap: 14px; margin: 0; font-size: 7px; }
.g-market dt { color: #999; margin-bottom: 4px; }
.g-market dd { margin: 0; font-weight: 500; }
.m-icons { display: flex; gap: 16px; margin-left: auto; }
.m-icons svg { width: 11px; height: 11px; fill: none; stroke: #333; }

.g-ticker { display: flex; height: 20px; padding: 0 15px 0 8px; align-items: center; font-size: 7px; border-top: 1px solid #f5f5f7; border-bottom: 1px solid #f5f5f7; }
.tick-left { display: flex; width: 644px; padding-right: 8px; }
.tick-right { display: flex; flex: 1; min-width: 0; }
.tick-left .star { width: 17px; }
.fire { width: 7px; height: 9px; margin: 0 9px 0 3px; border-radius: 50% 50% 40% 40%; background: #ee6238; }
.ticks { display: flex; flex: 1; gap: 7px; overflow: hidden; }
.ticks em { margin-left: 2px; }

/* Workspace */
.g-work {
    display: flex;
    gap: 4px;
    height: 421px;
    padding: 0 3px;
    background: #f7f7fa;
}

.g-left { display: flex; flex-direction: column; gap: 3px; flex: 1; min-width: 0; }
.g-upper { display: flex; gap: 4px; height: 378px; }
.panel { background: #fff; display: flex; flex-direction: column; }
.chart-panel { flex: 1; min-width: 0; }
.book-panel { width: 204px; padding: 0 9px 0 8px; }
.pos-panel { flex: 1; overflow: hidden; }
.trade-panel { width: 213px; padding: 0 9px 0 8px; }

.p-tabs { display: flex; align-items: center; gap: 9px; height: 28px; flex: none; color: #888; }
.chart-panel .p-tabs,
.p-times,
.pos-panel .p-tabs { padding: 0 12px 0 9px; }
.p-tabs .on { color: #222; font-weight: 600; height: 20px; padding-top: 4px; border-bottom: 1px solid #222; }
.tv { color: #222; font-weight: 600; }

.p-times { display: flex; align-items: center; height: 20px; color: #888; }
.p-times > span:not(.push),
.p-times > b { margin-right: 14px; }
.p-times b,
.p-times em { color: #333; }
.p-times svg { width: 9px; height: 9px; margin-right: 9px; fill: none; stroke: #444; }
.p-times em { margin-right: 14px; }
.p-times svg:last-child { margin-right: 0; }

.chart { width: 100%; height: 310px; }
.tools { fill: none; stroke: #777; }
.grid { fill: none; stroke: #eee; }
.osc path { fill: none; stroke-width: 1px; vector-effect: non-scaling-stroke; }
.t8 { font-size: 8px; fill: #888; }
.t7 { font-size: 7px; fill: #888; }
.t5 { font-size: 5px; }
.green { fill: #2fa37a; }
.gray { fill: #888; }
.tags { fill: #fff; font-weight: 500; }
.dark { fill: #4c3a00; }

.p-inds { display: flex; align-items: center; gap: 5px; height: 20px; padding: 0 0 0 30px; font-size: 7px; color: #999; }
.p-inds b { color: #333; }

.book-modes { display: flex; align-items: center; gap: 10px; height: 22px; }
.book-modes i { width: 10px; height: 9px; }
.book-modes span { margin-left: auto; }
.m1 { background: linear-gradient(#2fa37a 50%, #d6455f 50%); border-right: 5px solid #ddd; }
.m2 { background: #f4b8c4; border-right: 5px solid #a5dcc5; }
.m3 { background: #f4a8b8; border-right: 5px solid #eee; }
.m4 { background: #8ad4b5; border-right: 5px solid #eee; }

.book { width: 100%; border-collapse: collapse; font-size: 7px; table-layout: fixed; flex: 1; }
.book th { font-weight: 400; color: #999; height: 15px; padding: 0; text-align: right; }
.book th:first-child { text-align: left; width: 58px; }
.book th:last-child { width: 64px; }
.book td { padding: 0; height: 11px; text-align: right; font-weight: 500; }
.book td:first-child { text-align: left; }
#asks td:first-child { color: #4aae8a; font-weight: 400; }
#bids td:first-child { color: #d6455f; font-weight: 400; }
.flash { height: 11px; }
.flash.g { background: #e2f5ed; }
.flash.r { background: #fce7e8; }
.depth { display: flex; margin-left: 5px; height: 11px; position: relative; justify-content: flex-end; }
.depth i { position: absolute; left: 0; top: 0; height: 100%; background: #dcf4e9; }
#bids .depth i { background: #fbdde3; }
.depth span { position: relative; }
.book .mid td { height: 25px; color: #2fa37a; }
.mid b { font-size: 11px; }
.mid u { color: #aaa; font-weight: 400; }
.mid i { float: right; color: #333; }

.ratio { display: flex; align-items: center; height: 14px; font-size: 7px; }
.ratio i { flex: 1; height: 3px; }
.ratio span:first-child { margin-right: 3px; }
.ratio span:last-child { margin-left: 3px; }
.r1 { background: #d6536e; }
.r2 { background: #35a884; }

.p-tabs label,
.tr-checks label { display: flex; align-items: center; gap: 5px; color: #555; }
.desk input[type="checkbox"] { appearance: none; width: 9px; height: 9px; border: 1px solid #ddd; border-radius: 2px; }
.pos-bottom { display: flex; align-items: flex-start; gap: 14px; padding: 2px 12px 0 9px; }
.cross { padding: 0 6px; border-radius: 8px; background: #f4f4f4; font-size: 7px; }
.cursor { width: 8px; height: 12px; margin: -3px 0 0 114px; }

/* Trade form */
.trade-panel { font-size: 7px; color: #888; }
.trade-panel b { color: #333; font-weight: 500; }
.trade-panel b.up { color: #2fa37a; }
.tr-head { display: flex; align-items: center; gap: 12px; height: 28px; font-size: 8px; color: #333; }
.tr-head svg { width: 12px; height: 12px; margin: 0 3px 0 auto; }
.trade-panel .tr-tabs { height: 20px; font-size: 8px; border-bottom: 1px solid #f0f0f0; }
.tr-tabs .on { padding-top: 5px; }
.trade-panel > label { height: 16px; padding-top: 4px; color: #666; }
.tr-box { display: flex; align-items: center; gap: 12px; height: 24px; padding: 0 8px; border-radius: 3px; background: #f8f8f8; font-size: 8px; color: #333; }
.tr-box input { flex: 1; min-width: 0; }
.tr-box .bbo { color: #999; }
.tr-range { appearance: none; width: 100%; height: 1px; margin: 9px 0 5px; background: #eee; }
.tr-range::-webkit-slider-thumb { appearance: none; width: 9px; height: 9px; border: 1px solid #111; border-radius: 50%; background: #fff; }
.tr-row { display: flex; justify-content: space-between; align-items: center; height: 13px; flex: none; }
.tr-avail { height: 18px; }
.tr-avail svg { width: 22px; height: 10px; fill: none; stroke: #333; }
.tr-checks { display: flex; flex-direction: column; justify-content: space-between; height: 48px; margin: 6px 0 8px; }
.tr-btns { display: flex; gap: 7px; }
.tr-btns button { flex: 1; height: 23px; border-radius: 12px; color: #fff; font-size: 8px; font-weight: 700; }
.buy { background: #f03e56; }
.sell { background: #1cac6c; }
.tr-btns + .tr-row { height: 22px; }
.account { margin: auto -9px 0 -8px; padding: 6px 9px 3px 8px; border-top: 4px solid #f7f7fa; }
.account > b { display: flex; align-items: center; gap: 4px; font-size: 8px; font-weight: 700; }
.account svg { width: 30px; height: 10px; fill: none; stroke: #444; }
.account p { margin: 27px 0 9px; text-align: center; font-size: 8px; font-weight: 500; color: #222; }

.g-foot { display: flex; align-items: center; gap: 10px; height: 13px; padding: 0 9px; font-size: 7px; color: #777; }
.g-foot svg { width: 7px; height: 7px; }

/* Tabs style */
.tabs {
    display: flex;
    gap: 72px;
    padding: 41px 36px 0;
    font-size: 40px;
    font-weight: 700;
    line-height: 60px;
    color: #858789;
}

.tabs a {
    display: flex;
    flex-direction: column;
    align-items: center;
    height: 122px;
}

.tabs .active { color: #fff; }

.tabs .active::after {
    content: "";
    width: 84px;
    height: 9px;
    margin-top: 13px;
    background-color: #fff;
}

/* Chat style */
.chat {
    display: flex;
    flex-direction: column;
    align-items: flex-start;
    gap: 28px;
    padding: 62px 16px 0;
    mask-image: linear-gradient(transparent 10px, #000 160px);
}

.msg {
    margin: 0;
    padding: 12px 20px;
    border-radius: 12px;
    background-color: #040505;
    color: #7c7e7f;
    font-size: 40px;
    line-height: 56px;
    font-variant-numeric: tabular-nums;
}

.num { font-size: 38px; line-height: 1; }

.talk {
    padding: 10px 20px;
    color: #fff;
}

.talk-avatar,
.vip,
.rank,
.emoji { vertical-align: middle; }

.talk-avatar {
    display: inline-block;
    width: 72px;
    height: 72px;
    margin-right: 12px;
    border-radius: 50%;
    background-color: #131417;
    color: #868b90;
    font-size: 22px;
    line-height: 72px;
    text-align: center;
}

.talk-name { color: #858585; }

.vip {
    display: inline-block;
    height: 42px;
    margin: 0 13px 0 14px;
    padding: 0 10px;
    border: 2px solid #444;
    border-radius: 5px;
    color: #555;
    font-family: "DejaVu Sans", sans-serif;
    font-size: 26px;
    font-weight: 700;
    line-height: 38px;
}

.rank {
    display: inline-flex;
    align-items: center;
    gap: 6px;
    height: 42px;
    padding: 0 13px 0 12px;
    border-radius: 21px;
    background-color: #f62e31;
    font-family: "DejaVu Sans", sans-serif;
    font-size: 20px;
    font-weight: 700;
}

.rank svg { width: 30px; height: 27px; }
.rank .hs-back { fill: #fff; }
.colon { color: #858585; margin: 0 8px 0 20px; }
.emoji { display: inline-block; width: 36px; height: 36px; margin-left: 3px; }

/* Quick replies */
.quick {
    display: flex;
    gap: 24px;
    margin-top: 51px;
    padding-left: 36px;
    overflow: hidden;
}

.quick button {
    flex: none;
    height: 75px;
    padding: 0 12px;
    border-radius: 12px;
    background: linear-gradient(100deg, #191f30, #1c2934 60%, #26382f);
    font-size: 32px;
}

.quick .en { font-weight: 500; }

/* Composer style */
.compose {
    display: flex;
    gap: 36px;
    padding: 60px 36px 0;
}

.compose svg { fill: none; stroke: #939393; stroke-width: 4; }
.compose svg .solid { fill: #939393; stroke: none; }
.compose svg.coin,
.compose svg.like { stroke: none; }

.field {
    display: flex;
    align-items: center;
    gap: 37px;
    flex: 1;
    min-width: 0;
    height: 96px;
    padding: 0 24px;
    border-radius: 10px;
    background-color: #262827;
}

.field input { flex: 1; min-width: 0; font-size: 40px; }
.field input::placeholder { color: #9b9b9b; }
.field svg { width: 48px; height: 48px; }
.field button:nth-child(2) svg { width: 42px; }

.sq {
    position: relative;
    width: 96px;
    height: 96px;
    border-radius: 10px;
    background-color: #282828;
}

.count {
    position: absolute;
    right: -18px;
    bottom: 96px;
    padding: 0 9px;
    border-radius: 20px;
    background-color: #282828;
    color: #8c8c8c;
    font-size: 28px;
    font-weight: 500;
    line-height: 39px;
}

/* System navigation */
.sysnav {
    display: grid;
    grid-template-columns: 1fr 1fr 1fr;
    justify-items: center;
    padding: 84px 87px 44px;
}

.sysnav svg { height: 52px; fill: none; stroke: #949494; stroke-linecap: round; stroke-linejoin: round; }
```
